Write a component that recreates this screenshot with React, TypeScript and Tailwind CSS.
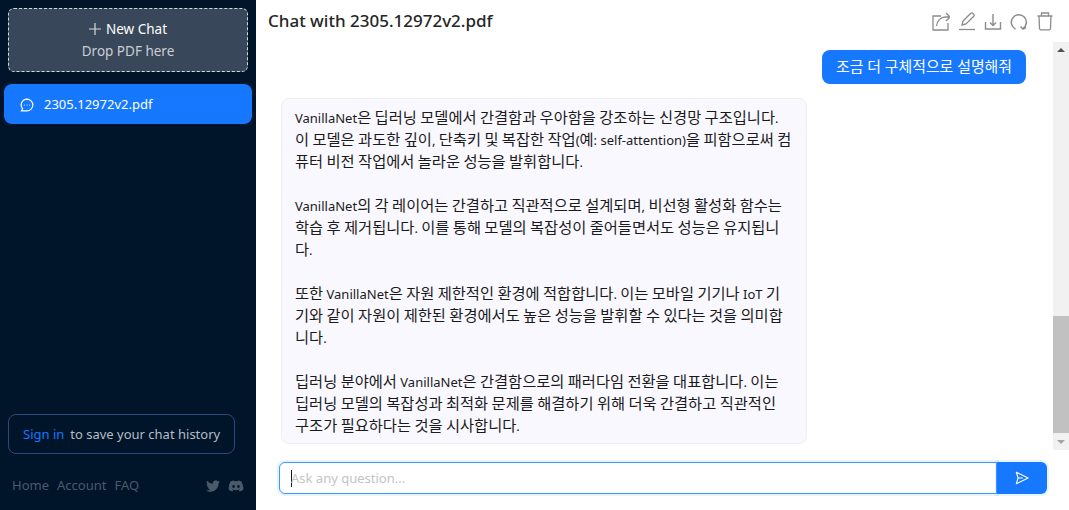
import React from "react";

const lines = [
  "VanillaNet은 딥러닝 모델에서 간결함과 우아함을 강조하는 신경망 구조입니다.",
  "이 모델은 과도한 깊이, 단축키 및 복잡한 작업(예: self-attention)을 피함으로써 컴",
  "퓨터 비전 작업에서 놀라운 성능을 발휘합니다.",
  "",
  "VanillaNet의 각 레이어는 간결하고 직관적으로 설계되며, 비선형 활성화 함수는",
  "학습 후 제거됩니다. 이를 통해 모델의 복잡성이 줄어들면서도 성능은 유지됩니",
  "다.",
  "",
  "또한 VanillaNet은 자원 제한적인 환경에 적합합니다. 이는 모바일 기기나 IoT 기",
  "기와 같이 자원이 제한된 환경에서도 높은 성능을 발휘할 수 있다는 것을 의미합",
  "니다.",
  "",
  "딥러닝 분야에서 VanillaNet은 간결함으로의 패러다임 전환을 대표합니다. 이는",
  "딥러닝 모델의 복잡성과 최적화 문제를 해결하기 위해 더욱 간결하고 직관적인",
  "구조가 필요하다는 것을 시사합니다.",
];

const font = { fontFamily: '"Noto Sans", "Noto Sans CJK KR", sans-serif' };

function Line({ text }: { text: string }) {
  const parts = text.split(/([\uAC00-\uD7A3]+)/);
  return (
    <div className="h-[22px]">
      {parts.map((p, i) =>
        i % 2 === 1 ? (
          <span key={i} className="text-[15.3px]">{p}</span>
        ) : (
          <span key={i}>{p}</span>
        )
      )}
    </div>
  );
}

function HeaderIcons() {
  const c = "#8c8c8c";
  return (
    <div className="flex items-center gap-2">
      <svg width="18" height="20" viewBox="0 0 18 20" fill="none" stroke={c} strokeWidth="1.3">
        <path d="M9 5H1v14h15v-7" />
        <path d="M4.500 15c.5-5 4-9 9-9h4M14 2l4 4-4 4" />
      </svg>
      <svg width="18" height="20" viewBox="0 0 18 20" fill="none" stroke={c} strokeWidth="1.300">
        <path d="M4 14l1-4 7.500-7.500a1.500 1.500 0 0 1 2.500 0l.5.5a1.500 1.500 0 0 1 0 2.500L8 13z" />
        <path d="M1 18.500h16" />
      </svg>
      <svg width="18" height="20" viewBox="0 0 18 20" fill="none" stroke={c} strokeWidth="1.400">
        <path d="M1.500 11v7h15v-7M9 3v11M6 11.500L9 14.500 12 11.500" />
      </svg>
      <svg width="18" height="20" viewBox="0 0 18 20" fill="none" stroke={c} strokeWidth="1.500">
        <path d="M5.500 18A7.500 7.500 0 1 1 13 17.500" />
        <path d="M10.500 15.500l2.500 2.500 3-1.500" />
      </svg>
      <svg width="18" height="20" viewBox="0 0 18 20" fill="none" stroke={c} strokeWidth="1.300">
        <path d="M1.500 5h15M5.500 5V2h7v3M3 5l.5 12.500a1.500 1.500 0 0 0 1.500 1.300h8a1.500 1.500 0 0 0 1.500-1.300L15 5" />
      </svg>
    </div>
  );
}

function Twitter() {
  return (
    <svg width="14" height="14" viewBox="0 0 24 24" fill="#4b5a6b">
      <path d="M23.950 4.570a10 10 0 0 1-2.820.770 4.960 4.960 0 0 0 2.160-2.720 9.900 9.900 0 0 1-3.120 1.180 4.920 4.920 0 0 0-8.380 4.480A13.940 13.940 0 0 1 1.640 3.160a4.820 4.820 0 0 0-.66 2.470 4.900 4.900 0 0 0 2.180 4.090 4.900 4.900 0 0 1-2.230-.62v.06a4.920 4.920 0 0 0 3.950 4.830 4.990 4.990 0 0 1-2.210.08 4.940 4.940 0 0 0 4.600 3.420A9.870 9.870 0 0 1 0 19.540a14 14 0 0 0 7.560 2.210c9.050 0 14-7.500 14-13.980 0-.21 0-.42-.02-.63a9.940 9.940 0 0 0 2.460-2.550z" />
    </svg>
  );
}

function Discord() {
  return (
    <svg width="16" height="14" viewBox="0 0 640 512" fill="#4b5a6b">
      <path d="M524.500 69.800a1.500 1.500 0 0 0-.8-.7A485 485 0 0 0 404 32a1.800 1.800 0 0 0-1.900.9 337.500 337.500 0 0 0-14.900 30.600 447.800 447.800 0 0 0-134.400 0 309.500 309.500 0 0 0-15.100-30.600 1.900 1.900 0 0 0-1.900-.9 483.700 483.700 0 0 0-119.800 37.100 1.700 1.700 0 0 0-.8.700C39.100 183.700 18.200 294.700 28.400 404.400a2 2 0 0 0 .8 1.400A487.700 487.700 0 0 0 176 479.900a1.900 1.900 0 0 0 2.100-.7A348.200 348.200 0 0 0 208.100 430.400a1.900 1.900 0 0 0-1-2.600 321.200 321.200 0 0 1-45.900-21.900 1.900 1.900 0 0 1-.2-3.100c3.100-2.300 6.200-4.700 9.100-7.100a1.800 1.800 0 0 1 1.900-.3c96.200 43.900 200.400 43.900 295.500 0a1.800 1.800 0 0 1 1.900.2c2.900 2.400 6 4.900 9.100 7.200a1.900 1.900 0 0 1-.2 3.100 301.400 301.400 0 0 1-45.900 21.800 1.900 1.900 0 0 0-1 2.600 391.100 391.100 0 0 0 30 48.800 1.900 1.900 0 0 0 2.100.7A486 486 0 0 0 610.700 405.700a1.900 1.900 0 0 0 .8-1.400C623.700 277.600 590.900 167.500 524.500 69.800zM222.500 337.600c-29 0-52.800-26.600-52.800-59.200S193.100 219.100 222.500 219.100c29.700 0 53.300 26.800 52.800 59.200C275.300 311 251.900 337.600 222.500 337.600zm195.400 0c-29 0-52.800-26.600-52.800-59.200s23.400-59.200 52.800-59.200c29.700 0 53.300 26.800 52.800 59.200C470.700 311 447.500 337.600 417.900 337.600z" />
    </svg>
  );
}

export default function App() {
  return (
    <div className="flex h-[510px] w-[1069px] overflow-hidden bg-white" style={font}>
      <aside className="flex w-[256px] shrink-0 flex-col bg-[#001529]">
        <div className="px-2 pt-2">
          <div className="flex h-[64px] flex-col items-center justify-center rounded-md border border-dashed border-[#d9d9d9] bg-[#39475a]">
            <div className="flex items-center gap-[5px] text-[13.5px] leading-[22px] text-white">
              <svg width="12" height="12" viewBox="0 0 12 12" stroke="#d9d9d9" strokeWidth="1.2"><path d="M6 0v12M0 6h12" /></svg>
              New Chat
            </div>
            <div className="text-[13.5px] leading-[22px] text-[#c9ced4]">Drop PDF here</div>
          </div>
        </div>
        <div className="mt-3 px-1">
          <div className="flex h-10 items-center gap-[10px] rounded-lg bg-[#1677ff] pt-px pl-4 text-[13px] text-white">
            <svg width="14" height="14" viewBox="0 0 24 24" fill="none" stroke="white" strokeWidth="2" strokeLinecap="round">
              <path d="M12 2a10 10 0 0 1 0 20H2.500l2-3.500A10 10 0 0 1 12 2z" />
              <path d="M7.500 12h.01M12 12h.01M16.500 12h.01" />
            </svg>
            2305.12972v2.pdf
          </div>
        </div>
        <div className="flex-1" />
        <div className="pr-[21px] pl-2">
          <div className="flex h-10 items-center gap-[6px] rounded-lg border border-[#2a4a7a] pt-px pl-[14px] text-[13px] whitespace-nowrap">
            <span className="text-[#1677ff]">Sign in</span>
            <span className="text-[#b4bcc6]">to save your chat history</span>
          </div>
        </div>
        <div className="flex h-[56px] items-center justify-between px-3 pt-2 text-[13px] text-[#4b5a6b]">
          <div className="flex gap-2">
            <span>Home</span>
            <span>Account</span>
            <span>FAQ</span>
          </div>
          <div className="flex items-center gap-2">
            <Twitter />
            <Discord />
          </div>
        </div>
      </aside>

      <main className="flex min-w-0 flex-1 flex-col">
        <header className="flex h-[42px] shrink-0 items-center justify-between pr-[15px] pl-3">
          <h1 className="text-[17px] font-medium text-[#262626]">Chat with 2305.12972v2.pdf</h1>
          <HeaderIcons />
        </header>
        <div className="flex h-[408px] shrink-0">
          <div className="min-w-0 flex-1 overflow-hidden pt-2 pr-[27px] pl-[25px]">
            <div className="flex justify-end">
              <div className="flex h-[34px] items-center rounded-lg bg-[#1677ff] px-[14px] pb-px text-[14.9px] text-white">
                조금 더 구체적으로 설명해줘
              </div>
            </div>
            <div className="mt-[14px] w-[526px] rounded-lg border border-[#eeeef3] bg-[#f9f8ff] px-[13px] pt-[7px] pb-[7px] text-[13px] leading-[22px] text-[#1a1a1a] whitespace-nowrap">
              {lines.map((l, i) => (
                <Line key={i} text={l} />
              ))}
            </div>
          </div>
          <div className="flex w-4 shrink-0 flex-col items-center bg-[#f1f1f1]">
            <div className="flex h-[16px] items-center justify-center">
              <div className="h-0 w-0 border-x-[4px] border-b-[4px] border-x-transparent border-b-[#505050]" />
            </div>
            <div className="h-[258px]" />
            <div className="h-[117px] w-full bg-[#c1c1c1]" />
            <div className="flex h-[17px] items-center justify-center">
              <div className="h-0 w-0 border-x-[4px] border-t-[4px] border-x-transparent border-t-[#a3a3a3]" />
            </div>
          </div>
        </div>
        <div className="flex flex-1 items-start pt-3 pr-[22px] pl-[23px]">
          <div className="flex h-8 flex-1 items-center rounded-l-md border border-[#4096ff] bg-white pt-px pl-[11px] text-[13px] text-[#c4c4c4] shadow-[0_0_0_2px_rgba(5,145,255,0.1)]">
            <span className="mr-[-1px] h-[17px] w-px bg-[#1a1a1a]" />
            Ask any question...
          </div>
          <div className="flex h-8 w-[50px] items-center justify-center rounded-r-md bg-[#1677ff] shadow-[0_0_0_2px_rgba(5,145,255,0.1)]">
            <svg width="14" height="14" viewBox="0 0 16 16" fill="none" stroke="white" strokeWidth="1.200" strokeLinejoin="round">
              <path d="M1.500 1.500L15 8 1.500 14.500 3.500 8z" />
              <path d="M3.500 8H9" />
            </svg>
          </div>
        </div>
      </main>
    </div>
  );
}
